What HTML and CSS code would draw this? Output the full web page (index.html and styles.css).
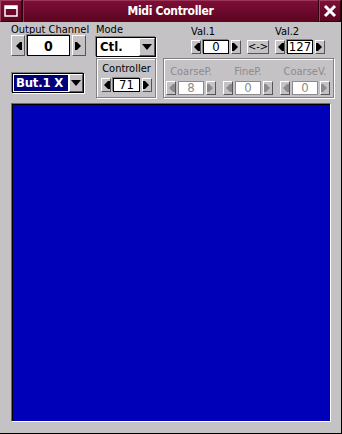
FILE: index.html
```html
<!DOCTYPE html>
<html lang="en">
<head>
    <meta charset="UTF-8">
    <title>Midi Controller</title>
    <link rel="stylesheet" href="styles.css">
</head>
<body>
    <div class="window">
        <div class="titlebar">
            <div class="tb-btn">
                <svg width="14" height="12" viewBox="0 0 14 12"><rect x="1" y="1" width="12" height="10" fill="none" stroke="#fff" stroke-width="1.5"/><rect x="1" y="1" width="12" height="3" fill="#fff"/></svg>
            </div>
            <div class="title">Midi Controller</div>
            <div class="tb-btn">
                <svg width="14" height="14" viewBox="0 0 14 14"><path d="M2 2 L12 12 M12 2 L2 12" stroke="#fff" stroke-width="3"/></svg>
            </div>
        </div>

        <div class="content">
            <div class="controls">
                <div class="col col-out">
                    <div class="field-block">
                        <div class="label">Output Channel</div>
                        <div class="spinner big">
                            <button class="arrow left"><span></span></button>
                            <div class="entry">0</div>
                            <button class="arrow right"><span></span></button>
                        </div>
                    </div>
                    <div class="combo selected">
                        <div class="combo-text">But.1 X</div>
                        <button class="combo-btn"><span></span></button>
                    </div>
                </div>

                <div class="col col-mode">
                    <div class="field-block">
                        <div class="label">Mode</div>
                        <div class="combo">
                            <div class="combo-text">Ctl.</div>
                            <button class="combo-btn"><span></span></button>
                        </div>
                    </div>
                    <div class="group">
                        <div class="label">Controller</div>
                        <div class="spinner small">
                            <button class="arrow left"><span></span></button>
                            <div class="entry">71</div>
                            <button class="arrow right"><span></span></button>
                        </div>
                    </div>
                </div>

                <div class="col col-vals">
                    <div class="val-row">
                        <div class="field-block">
                            <div class="label">Val.1</div>
                            <div class="spinner small">
                                <button class="arrow left"><span></span></button>
                                <div class="entry">0</div>
                                <button class="arrow right"><span></span></button>
                            </div>
                        </div>
                        <button class="swap">&lt;-&gt;</button>
                        <div class="field-block">
                            <div class="label">Val.2</div>
                            <div class="spinner small">
                                <button class="arrow left"><span></span></button>
                                <div class="entry">127</div>
                                <button class="arrow right"><span></span></button>
                            </div>
                        </div>
                    </div>
                    <div class="group disabled">
                        <div class="sub">
                            <div class="label">CoarseP.</div>
                            <div class="spinner small">
                                <button class="arrow left"><span></span></button>
                                <div class="entry">8</div>
                                <button class="arrow right"><span></span></button>
                            </div>
                        </div>
                        <div class="sub">
                            <div class="label">FineP.</div>
                            <div class="spinner small">
                                <button class="arrow left"><span></span></button>
                                <div class="entry">0</div>
                                <button class="arrow right"><span></span></button>
                            </div>
                        </div>
                        <div class="sub">
                            <div class="label">CoarseV.</div>
                            <div class="spinner small">
                                <button class="arrow left"><span></span></button>
                                <div class="entry">0</div>
                                <button class="arrow right"><span></span></button>
                            </div>
                        </div>
                    </div>
                </div>
            </div>

            <div class="pad"></div>
        </div>
    </div>
</body>
</html>
```

FILE: styles.css
```css
html, body {
    margin: 0;
    padding: 0;
}

body {
    font-family: "DejaVu Sans Condensed", "DejaVu Sans", sans-serif;
    font-size: 11px;
    color: #000;
    white-space: nowrap;
}

.window {
    width: 342px;
    height: 434px;
    box-sizing: border-box;
    background-color: #c5c2c5;
    border-right: 1px solid #000;
    border-bottom: 1px solid #000;
    display: flex;
    flex-direction: column;
}

/* title bar */
.titlebar {
    height: 22px;
    display: flex;
    background: linear-gradient(to bottom, #7e0f38, #5c0420);
}

.tb-btn {
    width: 20px;
    height: 20px;
    border: 1px solid #300010;
    border-top-color: #a04060;
    border-left-color: #a04060;
    display: flex;
    align-items: center;
    justify-content: center;
}

.title {
    flex: 1;
    color: #fff;
    font-weight: bold;
    font-size: 12px;
    letter-spacing: -0.3px;
    text-align: center;
    line-height: 22px;
    border-left: 1px solid #300010;
    border-right: 1px solid #300010;
    box-shadow: inset 1px 1px 0 #9a3558;
}

.content {
    flex: 1;
    padding: 2px 10px 11px 11px;
    display: flex;
    flex-direction: column;
}

.controls {
    display: grid;
    grid-template-columns: 75px 60px 168px;
    column-gap: 10px;
    height: 74px;
}

.col-vals {
    margin-left: -3px;
}

.col {
    display: flex;
    flex-direction: column;
    justify-content: space-between;
}

.label {
    line-height: 12px;
    height: 12px;
}

.field-block .label {
    margin-bottom: 1px;
}

/* spinners */
.spinner {
    display: flex;
    align-items: stretch;
}

.spinner.big {
    height: 21px;
    margin-top: -2px;
}

.spinner.small {
    height: 14px;
}

.arrow {
    padding: 0;
    margin: 0;
    background: #c5c2c5;
    border: 1px solid;
    border-color: #fff #555 #555 #fff;
    display: flex;
    align-items: center;
    justify-content: center;
}

.spinner.big .arrow {
    width: 14px;
}

.spinner.small .arrow {
    width: 10px;
}

.arrow span {
    display: block;
    width: 0;
    height: 0;
    border-top: 4px solid transparent;
    border-bottom: 4px solid transparent;
}

.arrow.left span {
    border-right: 4px solid #000;
    box-shadow: 2px 0 0 0 #000;
}

.arrow.right span {
    border-left: 4px solid #000;
    box-shadow: -2px 0 0 0 #000;
}

.entry {
    flex: 1;
    background: #fff;
    border: 1px solid #000;
    box-shadow: -1px -1px 0 #808080;
    margin: 0 2px;
    text-align: center;
    font-size: 13px;
    line-height: 12px;
    display: flex;
    align-items: center;
    justify-content: center;
}

.spinner.big .entry {
    font-weight: bold;
    font-size: 14px;
}

/* combos */
.combo {
    display: flex;
    height: 18px;
    border: 1px solid #000;
    box-shadow: -1px -1px 0 #808080, 1px 1px 0 #fff;
    background: #fff;
}

.col-out .combo {
    margin: 0 2px 5px 1px;
}

.combo-text {
    flex: 1;
    font-size: 13px;
    font-weight: bold;
    line-height: 18px;
    padding-left: 3px;
    overflow: hidden;
}

.combo.selected .combo-text {
    background: #00007b;
    color: #fff;
    margin: 1px;
    line-height: 16px;
    padding-left: 2px;
    letter-spacing: -0.2px;
}

.combo-btn {
    width: 16px;
    padding: 0;
    margin: 0;
    background: #c5c2c5;
    border: 1px solid;
    border-color: #fff #555 #555 #fff;
    display: flex;
    align-items: center;
    justify-content: center;
}

.combo.selected .combo-btn {
    width: 14px;
}

.combo-btn span {
    display: block;
    width: 0;
    height: 0;
    border-left: 5px solid transparent;
    border-right: 5px solid transparent;
    border-top: 6px solid #000;
}

/* groups */
.group {
    height: 40px;
    box-sizing: border-box;
    border: 1px solid #808080;
    box-shadow: inset 1px 1px 0 #fff, 1px 1px 0 #fff;
    padding: 4px 3px 0 4px;
    display: flex;
    flex-direction: column;
    align-items: center;
}

.group .label {
    margin-bottom: 3px;
}

.group .spinner {
    align-self: stretch;
}

.group.disabled {
    flex-direction: row;
    justify-content: space-between;
    padding: 4px 3px 0 2px;
    color: #8c8a8c;
}

.sub {
    width: 50px;
    display: flex;
    flex-direction: column;
    align-items: center;
}

.sub .spinner {
    align-self: stretch;
}

.disabled .entry {
    border-color: #8c8a8c;
    color: #8c8a8c;
    box-shadow: none;
}

.disabled .arrow.left span {
    border-right-color: #8c8a8c;
    box-shadow: 2px 0 0 0 #8c8a8c;
}

.disabled .arrow.right span {
    border-left-color: #8c8a8c;
    box-shadow: -2px 0 0 0 #8c8a8c;
}

/* values */
.val-row {
    display: flex;
    align-items: flex-end;
    gap: 6px;
    padding-left: 28px;
    height: 34px;
    padding-bottom: 4px;
    box-sizing: border-box;
}

.val-row .field-block {
    width: 50px;
}

.val-row .field-block .label {
    margin-bottom: 2px;
}

.swap {
    height: 14px;
    width: 22px;
    padding: 0;
    font-family: "DejaVu Sans Condensed", "DejaVu Sans", sans-serif;
    font-size: 11px;
    line-height: 10px;
    background: #c5c2c5;
    border: 1px solid;
    border-color: #fff #555 #555 #fff;
}

/* play pad */
.pad {
    flex: 1;
    margin-top: 5px;
    background: #0000b8;
    border: 1px solid;
    border-color: #6b6b6b #fff #fff #6b6b6b;
    box-shadow: inset 1px 1px 0 #000;
}
```
